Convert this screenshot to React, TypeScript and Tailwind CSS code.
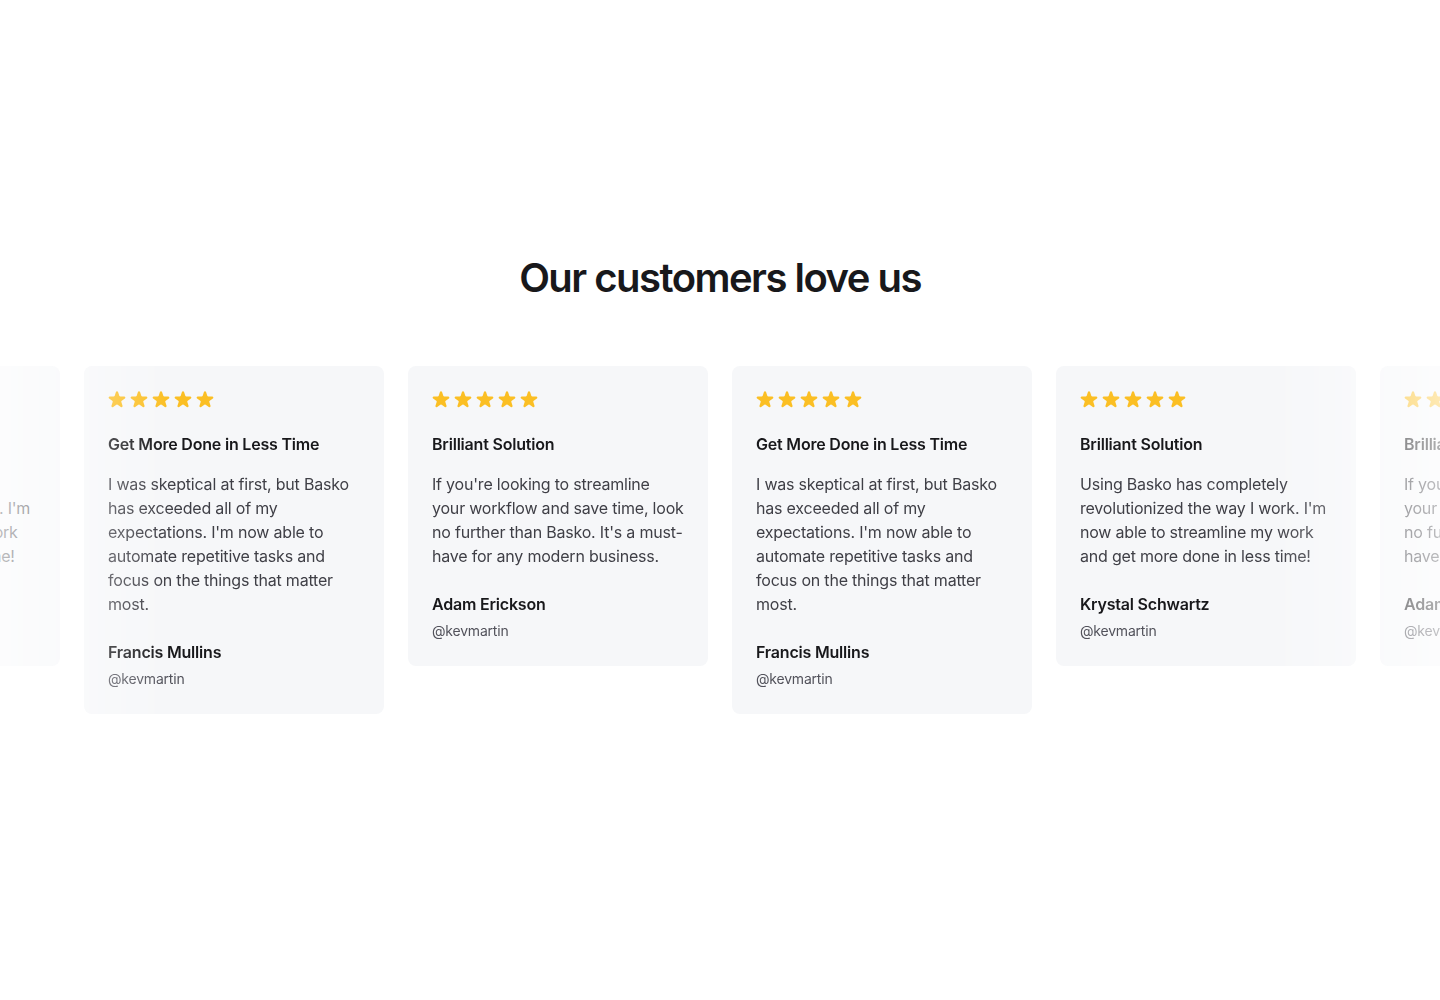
import React from 'react';

type Review = {
  title: string;
  body: string;
  name: string;
  handle: string;
};

const getMore: Review = {
  title: 'Get More Done in Less Time',
  body: "I was skeptical at first, but Basko has exceeded all of my expectations. I'm now able to automate repetitive tasks and focus on the things that matter most.",
  name: 'Francis Mullins',
  handle: '@kevmartin',
};

const adam: Review = {
  title: 'Brilliant Solution',
  body: "If you're looking to streamline your workflow and save time, look no further than Basko. It's a must-have for any modern business.",
  name: 'Adam Erickson',
  handle: '@kevmartin',
};

const krystal: Review = {
  title: 'Brilliant Solution',
  body: "Using Basko has completely revolutionized the way I work. I'm now able to streamline my work and get more done in less time!",
  name: 'Krystal Schwartz',
  handle: '@kevmartin',
};

const reviews = [krystal, getMore, adam, getMore, krystal, adam];

const StarIcon = () => (
  <svg width="18" height="18" viewBox="2 2 16 16" fill="#fbbf24" aria-hidden="true">
    <path d="M9.049 2.927c.3-.921 1.603-.921 1.902 0l1.07 3.292a1 1 0 00.95.69h3.462c.969 0 1.371 1.24.588 1.81l-2.8 2.034a1 1 0 00-.364 1.118l1.07 3.292c.3.921-.755 1.688-1.54 1.118l-2.8-2.034a1 1 0 00-1.175 0l-2.8 2.034c-.784.57-1.838-.197-1.539-1.118l1.07-3.292a1 1 0 00-.364-1.118L2.98 8.72c-.783-.57-.38-1.81.588-1.81h3.461a1 1 0 00.951-.69l1.07-3.292z" />
  </svg>
);

const ReviewCard = ({ review }: { review: Review }) => (
  <div className="w-[300px] shrink-0 rounded-lg bg-[#f6f7f9] p-6 pb-[25px] tracking-[-0.0125em]">
    <div className="flex h-5 items-center gap-1">
      {[0, 1, 2, 3, 4].map((i) => (
        <StarIcon key={i} />
      ))}
    </div>
    <h3 className="mt-[22px] text-base leading-6 font-semibold text-[#18181b]">{review.title}</h3>
    <p className="mt-4 text-base leading-6 text-[#3f3f46]">{review.body}</p>
    <div className="mt-6 text-base leading-6 font-semibold text-[#18181b]">{review.name}</div>
    <div className="mt-[5px] text-sm leading-5 text-[#52525b]">{review.handle}</div>
  </div>
);

export default function App() {
  return (
    <div className="min-h-screen bg-white font-['Inter',sans-serif] antialiased">
      <section className="pt-[254px] pb-[286px]">
        <h2 className="text-center text-[40px] leading-[48px] font-semibold tracking-[-0.038em] text-[#18181b]">
          Our customers love us
        </h2>

        {/* Testimonials strip, faded at both edges */}
        <div className="mt-[64px] overflow-hidden [mask-image:linear-gradient(to_right,rgba(0,0,0,0.35),black_170px,black_calc(100%-170px),rgba(0,0,0,0.35))]">
          <div className="flex items-start justify-center gap-6">
            {reviews.map((r, i) => (
              <ReviewCard key={i} review={r} />
            ))}
          </div>
        </div>
      </section>
    </div>
  );
}
